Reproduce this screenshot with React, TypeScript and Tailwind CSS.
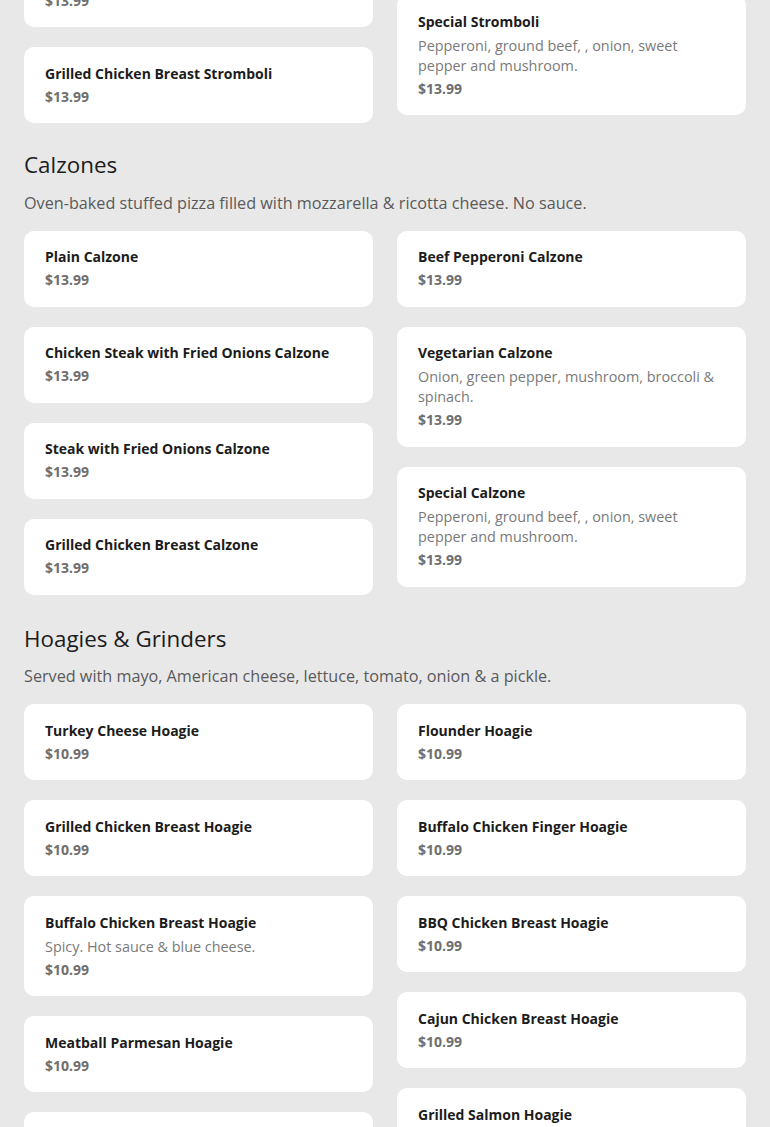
import React from "react";

type Item = {
	name: string;
	price: string;
	desc?: string;
};

type Section = {
	title: string;
	subtitle: string;
	left: Item[];
	right: Item[];
};

const sections: Section[] = [
	{
		title: "Calzones",
		subtitle:
			"Oven-baked stuffed pizza filled with mozzarella & ricotta cheese. No sauce.",
		left: [
			{ name: "Plain Calzone", price: "$13.99" },
			{ name: "Chicken Steak with Fried Onions Calzone", price: "$13.99" },
			{ name: "Steak with Fried Onions Calzone", price: "$13.99" },
			{ name: "Grilled Chicken Breast Calzone", price: "$13.99" },
		],
		right: [
			{ name: "Beef Pepperoni Calzone", price: "$13.99" },
			{
				name: "Vegetarian Calzone",
				desc: "Onion, green pepper, mushroom, broccoli & spinach.",
				price: "$13.99",
			},
			{
				name: "Special Calzone",
				desc: "Pepperoni, ground beef, , onion, sweet pepper and mushroom.",
				price: "$13.99",
			},
		],
	},
	{
		title: "Hoagies & Grinders",
		subtitle:
			"Served with mayo, American cheese, lettuce, tomato, onion & a pickle.",
		left: [
			{ name: "Turkey Cheese Hoagie", price: "$10.99" },
			{ name: "Grilled Chicken Breast Hoagie", price: "$10.99" },
			{
				name: "Buffalo Chicken Breast Hoagie",
				desc: "Spicy. Hot sauce & blue cheese.",
				price: "$10.99",
			},
			{ name: "Meatball Parmesan Hoagie", price: "$10.99" },
			{ name: "Italian Hoagie", price: "$10.99" },
		],
		right: [
			{ name: "Flounder Hoagie", price: "$10.99" },
			{ name: "Buffalo Chicken Finger Hoagie", price: "$10.99" },
			{ name: "BBQ Chicken Breast Hoagie", price: "$10.99" },
			{ name: "Cajun Chicken Breast Hoagie", price: "$10.99" },
			{ name: "Grilled Salmon Hoagie", price: "$10.99" },
		],
	},
];

function Card({ item }: { item: Item }) {
	return (
		<div className="bg-white rounded-[10px] px-[21px] pt-[16.5px] pb-[16.5px]">
			<div className="text-[14px] leading-5 font-bold text-[#1c1c1c]">
				{item.name}
			</div>
			{item.desc && (
				<div className="mt-[4px] text-[14.4px] leading-5 text-[#7a7a7a]">
					{item.desc}
				</div>
			)}
			<div className="mt-[3px] text-[14px] leading-5 font-bold text-[#6e6e6e]">
				{item.price}
			</div>
		</div>
	);
}

function Columns({ left, right }: { left: Item[]; right: Item[] }) {
	return (
		<div className="grid grid-cols-2 gap-6 items-start">
			<div className="flex flex-col gap-5">
				{left.map((it) => (
					<Card key={it.name} item={it} />
				))}
			</div>
			<div className="flex flex-col gap-5">
				{right.map((it) => (
					<Card key={it.name} item={it} />
				))}
			</div>
		</div>
	);
}

export default function App() {
	return (
		<div
			className="h-screen overflow-hidden bg-[#e8e8e8] px-6"
			style={{ fontFamily: '"Open Sans", "Noto Sans", sans-serif' }}
		>
			{/* tail of the stromboli section, scrolled partly off screen */}
			<div className="-mt-[49px] grid grid-cols-2 gap-6 items-start">
				<div className="flex flex-col gap-5">
					<Card item={{ name: "Steak Stromboli", price: "$13.99" }} />
					<Card
						item={{ name: "Grilled Chicken Breast Stromboli", price: "$13.99" }}
					/>
				</div>
				<div className="flex flex-col gap-5 pt-[44px]">
					<Card
						item={{
							name: "Special Stromboli",
							desc: "Pepperoni, ground beef, , onion, sweet pepper and mushroom.",
							price: "$13.99",
						}}
					/>
				</div>
			</div>

			{sections.map((s, i) => (
				<section key={s.title} className={i === 0 ? "mt-[26px]" : "mt-[28px]"}>
					<h2 className="text-[22.4px] leading-8 text-[#1c1c1c]">{s.title}</h2>
					<p className="mt-[9.5px] text-[16.2px] leading-6 text-[#5a5a5a]">
						{s.subtitle}
					</p>
					<div className="mt-4">
						<Columns left={s.left} right={s.right} />
					</div>
				</section>
			))}
		</div>
	);
}
